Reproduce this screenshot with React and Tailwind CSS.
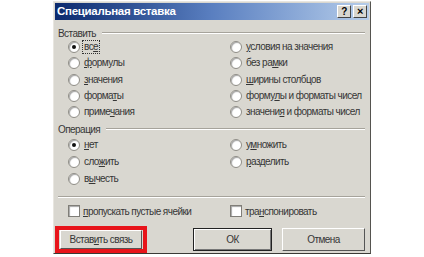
import React from 'react'

function Radio({ checked, children, focus, h = 'h-[16.25px]' }) {
    return (
        <div className={`flex items-center ${h} whitespace-nowrap`}>
            <span className="relative w-[12px] h-[12px] rounded-full bg-white border border-[#8f8d86] shadow-[inset_1px_1px_1px_rgba(0,0,0,0.35)] shrink-0">
                {checked && <span className="absolute left-[3px] top-[3px] w-[4px] h-[4px] rounded-full bg-[#111]" />}
            </span>
            <span className={`ml-[3px] px-[1px] leading-[12px] ${focus ? 'outline outline-1 outline-dotted outline-[#333]' : ''}`}>
                {children}
            </span>
        </div>
    )
}

function Check({ children }) {
    return (
        <div className="flex items-center h-[16px] whitespace-nowrap">
            <span className="w-[12px] h-[12px] bg-white border border-[#807e78] shadow-[inset_1px_1px_1px_rgba(0,0,0,0.35)] shrink-0" />
            <span className="ml-[3px]">{children}</span>
        </div>
    )
}

function GroupLabel({ children }) {
    return (
        <div className="flex items-center h-[14px]">
            <span className="pr-[6px]">{children}</span>
            <div className="flex-1 border-t border-[#a6a39b] border-b-white border-b h-0" />
        </div>
    )
}

const U = ({ children }) => <span className="underline underline-offset-1">{children}</span>

export default function App() {
    return (
        <div className="w-[424px] h-[257px] bg-white pl-[53px] pt-[1px]" style={{ fontFamily: "'Liberation Sans', Arial, sans-serif" }}>
            <div className="w-[318px] h-[253px] bg-[#d9d7d0] border border-t-[#e8e6e0] border-l-[#e8e6e0] border-r-[#55544f] border-b-[#3a3935] flex flex-col text-[10px] tracking-[-0.55px] text-[#363636]">
                {/* title bar */}
                <div className="mx-[1px] mt-[1px] h-[17px] flex items-center pl-[2px] pr-[2px] bg-gradient-to-r from-[#0c2a6e] via-[#5a7fc0] to-[#b6cdea]">
                    <span className="text-white font-bold text-[11.5px] tracking-[-0.3px]">Специальная вставка</span>
                    <div className="ml-auto flex gap-[2px]">
                        <div className="w-[14px] h-[13px] bg-[#d9d7d0] border border-t-white border-l-white border-r-[#444] border-b-[#444] flex items-center justify-center text-[10px] font-bold leading-none text-black">?</div>
                        <div className="w-[14px] h-[13px] bg-[#d9d7d0] border border-t-white border-l-white border-r-[#444] border-b-[#444] flex items-center justify-center text-[11px] font-bold leading-none text-black">×</div>
                    </div>
                </div>

                <div className="pl-[4px] pr-[5px] pt-[6px] flex flex-col">
                    <GroupLabel>Вставить</GroupLabel>
                    <div className="grid grid-cols-[162px_1fr] pl-[10px] -mt-[1px]">
                        <Radio checked focus>вс<U>е</U></Radio>
                        <Radio><U>у</U>словия на значения</Radio>
                        <Radio><U>ф</U>ормулы</Radio>
                        <Radio>без ра<U>м</U>ки</Radio>
                        <Radio><U>з</U>начения</Radio>
                        <Radio><U>ш</U>ирины столбцов</Radio>
                        <Radio>форма<U>т</U>ы</Radio>
                        <Radio>форму<U>л</U>ы и форматы чисел</Radio>
                        <Radio>приме<U>ч</U>ания</Radio>
                        <Radio>значени<U>я</U> и форматы чисел</Radio>
                    </div>

                    <div className="mt-[2px]">
                        <GroupLabel>Операция</GroupLabel>
                    </div>
                    <div className="grid grid-cols-[162px_1fr] pl-[10px]">
                        <Radio checked h="h-[17px]"><U>н</U>ет</Radio>
                        <Radio h="h-[17px]">у<U>м</U>ножить</Radio>
                        <Radio h="h-[17px]">сло<U>ж</U>ить</Radio>
                        <Radio h="h-[17px]"><U>р</U>азделить</Radio>
                        <Radio h="h-[17px]">в<U>ы</U>честь</Radio>
                    </div>

                    <div className="mt-[9px] h-0 border-t border-[#a6a39b] border-b border-b-white" />

                    <div className="grid grid-cols-[162px_1fr] pl-[10px] mt-[5px]">
                        <Check><U>п</U>ропускать пустые ячейки</Check>
                        <Check>тра<U>н</U>спонировать</Check>
                    </div>

                    <div className="flex items-center mt-[9px] pl-[2px] h-[23px]">
                        <div className="relative">
                            <div className="absolute -left-[5px] -top-[4px] w-[92px] h-[27px] border-[4px] border-[#e8141a]" />
                            <div className="w-[82px] h-[19px] flex items-center justify-center bg-[#d9d7d0] border border-t-white border-l-white border-r-[#555] border-b-[#555]">
                                Встав<U>и</U>ть связь
                            </div>
                        </div>
                        <div className="ml-[51px] w-[79px] h-[23px] flex items-center justify-center bg-[#d9d7d0] border border-[#222] shadow-[inset_1px_1px_0_white,inset_-1px_-1px_0_#777]">
                            ОК
                        </div>
                        <div className="ml-[10px] w-[83px] h-[23px] flex items-center justify-center bg-[#d9d7d0] border border-t-white border-l-white border-r-[#555] border-b-[#555]">
                            Отмена
                        </div>
                    </div>
                </div>
            </div>
        </div>
    )
}
